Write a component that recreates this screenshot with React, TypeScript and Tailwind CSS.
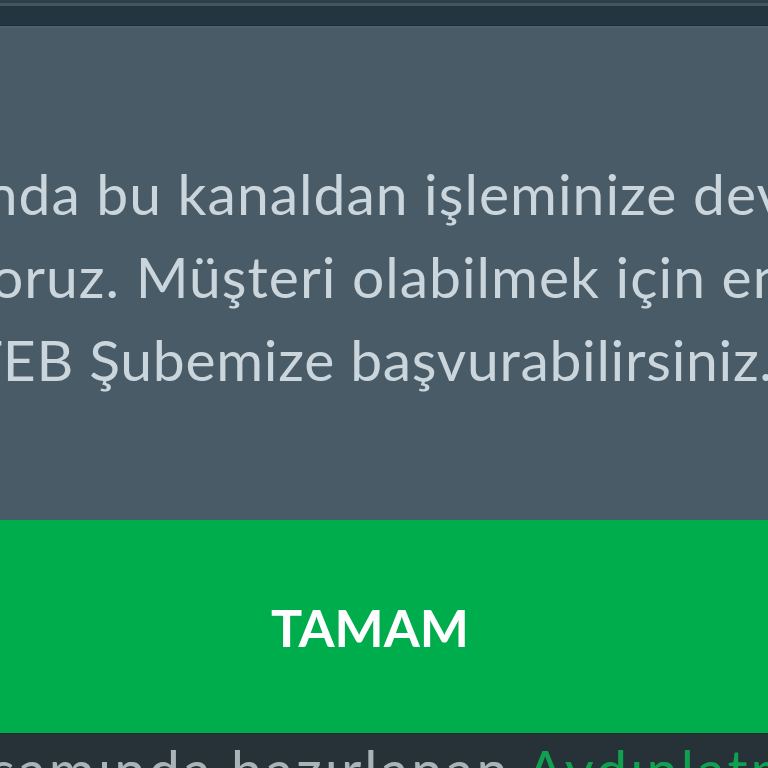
import React from 'react';

const font = { fontFamily: 'Lato, "Noto Sans", sans-serif' };

export default function App() {
  return (
    <div className="w-[768px] h-[768px] overflow-hidden bg-[#263238] flex flex-col" style={font}>
      {/* top bar behind the dialog */}
      <div className="shrink-0 h-[3px] bg-[#2d3f48]" />
      <div className="shrink-0 h-[3px] bg-[#46565f]" />
      <div className="shrink-0 h-[19px] bg-[#24353f]" />
      <div className="shrink-0 h-px bg-[#1d2c34]" />
      <div className="shrink-0 h-[2px] bg-[#4f616c]" />

      {/* dialog body */}
      <div className="shrink-0 h-[492px] bg-[#485b67] flex justify-center pr-[28px] pt-[124px] overflow-hidden">
        <p className="w-[1400px] shrink-0 text-center text-[57px] leading-[83px] tracking-[1px] text-[#cbd5dc] whitespace-nowrap">
          Şu anda bu kanaldan işleminize devam
          <br />
          edemiyoruz. Müşteri olabilmek için en yakın
          <br />
          <span className="inline-block pl-[2px] tracking-[0.7px]">TEB Şubemize başvurabilirsiniz.</span>
        </p>
      </div>

      {/* action */}
      <button className="shrink-0 h-[213px] w-full bg-[#00ad4c] text-white text-[52px] font-bold flex items-center justify-center pr-[28px]">
        TAMAM
      </button>
      <div className="shrink-0 h-px bg-[#1f2b30]" />

      {/* text under the dialog */}
      <div className="shrink-0 pt-[8px] overflow-hidden">
        <p className="whitespace-nowrap text-[56px] leading-[56px] tracking-[3px] text-[#aab3b8] -ml-[106px]">
          kapsamında hazırlanan <span className="text-[#10a04f]">Aydınlatma Metni</span>
        </p>
      </div>
    </div>
  );
}
